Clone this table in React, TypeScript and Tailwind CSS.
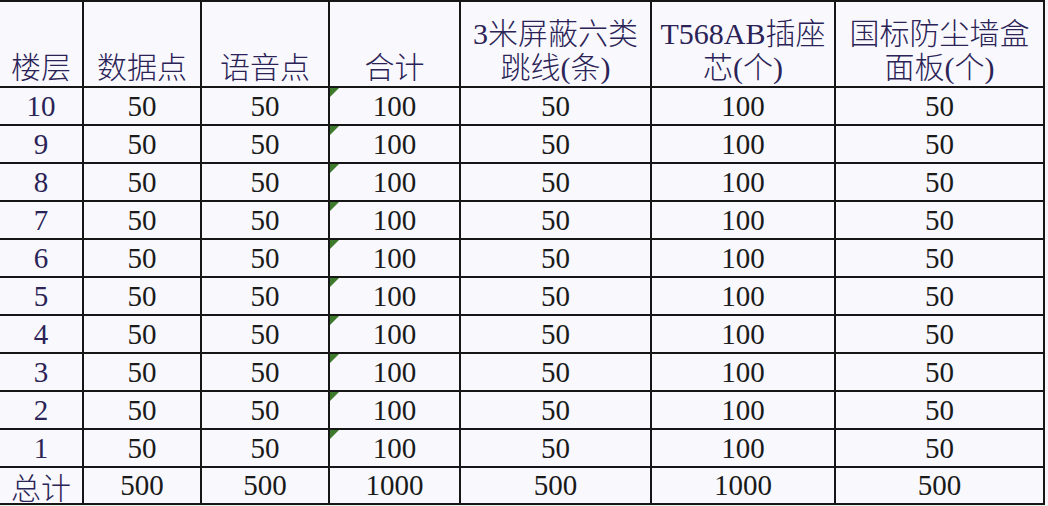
import React from 'react';

const floors = [10, 9, 8, 7, 6, 5, 4, 3, 2, 1];

const font = { fontFamily: '"Liberation Serif", "Noto Sans CJK SC", serif' };

function Corner() {
  return (
    <span className="absolute left-0 top-0 h-0 w-0 border-t-[9px] border-r-[9px] border-t-[#3d7a2c] border-r-transparent" />
  );
}

export default function App() {
  const th = 'border-2 border-[#161616] align-bottom text-center font-light leading-[34px] pb-[1px] text-[30px] text-[#2b2356]';
  const td = 'border-2 border-[#161616] text-center text-[29px] leading-none text-[#1a1a1a]';
  return (
    <div className="h-[506px] w-[1048px] overflow-hidden bg-[#f7f7fc]" style={font}>
      <table className="table-fixed border-collapse bg-[#f8f8fd]" style={{ width: 1045 }}>
        <colgroup>
          <col className="w-[83px]" />
          <col className="w-[118px]" />
          <col className="w-[128px]" />
          <col className="w-[131px]" />
          <col className="w-[191px]" />
          <col className="w-[184px]" />
          <col className="w-[209px]" />
        </colgroup>
        <thead>
          <tr className="h-[86px]">
            <th className={th + ' border-l-0'}>楼层</th>
            <th className={th}>数据点</th>
            <th className={th}>语音点</th>
            <th className={th}>合计</th>
            <th className={th}>
              3米屏蔽六类
              <br />
              跳线(条)
            </th>
            <th className={th}>
              T568AB插座
              <br />
              芯(个)
            </th>
            <th className={th}>
              国标防尘墙盒
              <br />
              面板(个)
            </th>
          </tr>
        </thead>
        <tbody>
          {floors.map((f) => (
            <tr key={f} className="h-[38px]">
              <td className={td + ' border-l-0 text-[#2b2356]'}>{f}</td>
              <td className={td}>50</td>
              <td className={td}>50</td>
              <td className={td + ' relative'}>
                <Corner />
                100
              </td>
              <td className={td}>50</td>
              <td className={td}>100</td>
              <td className={td}>50</td>
            </tr>
          ))}
          <tr className="h-[37px]">
            <td
              className="border-2 border-l-0 border-[#161616] text-center text-[30px] font-light leading-[30px] text-[#2b2356]"
              style={{ fontFamily: '"Noto Sans CJK SC", sans-serif' }}
            >
              总计
            </td>
            <td className={td}>500</td>
            <td className={td}>500</td>
            <td className={td}>1000</td>
            <td className={td}>500</td>
            <td className={td}>1000</td>
            <td className={td}>500</td>
          </tr>
        </tbody>
      </table>
      <div className="h-[6px] bg-[#eaf4e2]" />
    </div>
  );
}
